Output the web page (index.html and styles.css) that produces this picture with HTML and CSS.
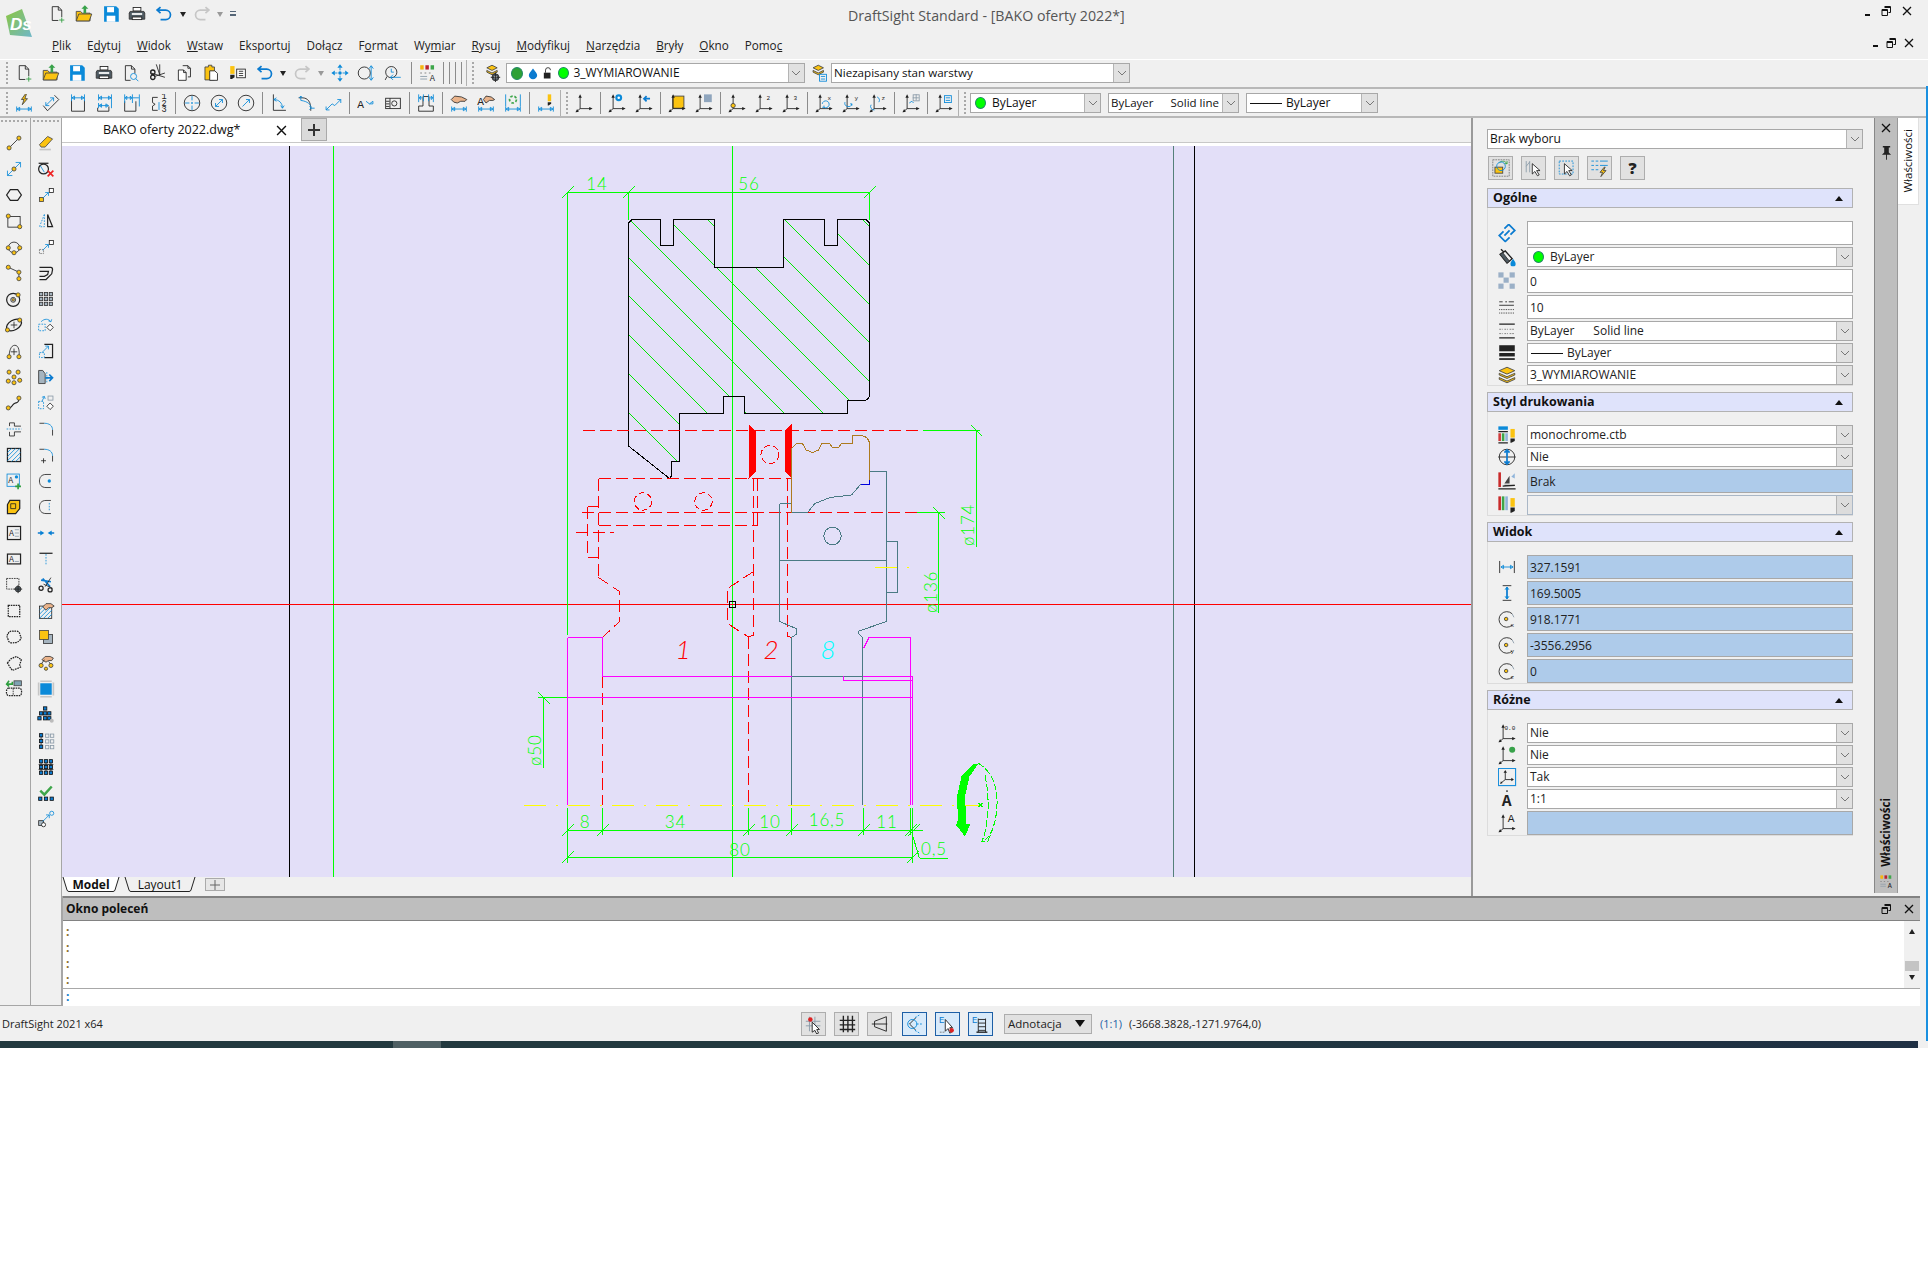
FILE: index.html
```html
<!DOCTYPE html>
<html lang="pl">
<head>
<meta charset="utf-8">
<title>DraftSight Standard - [BAKO oferty 2022*]</title>
<link rel="stylesheet" href="styles.css">
</head>
<body>
<svg class="defs" aria-hidden="true">
<symbol id="new" viewBox="0 0 22 22"><path class="k" d="M5.5 2.5h7l4 4v8M12.5 2.5v4h4M5.5 2.5v16h7"/><path class="g" d="M16.5 15v6M13.5 18h6"/></symbol>
<symbol id="open" viewBox="0 0 22 22"><path class="y" d="M2 8h5l2 2h9v9H2z"/><path class="y" d="M2 19l3-8h15l-3 8z"/><path class="gf" d="M12 1l4 4h-2.5v5h-3V5H8z"/></symbol>
<symbol id="save" viewBox="0 0 22 22"><path class="bf" d="M3 2h14l3 3v15H3z"/><rect class="wf" x="6.500" y="3" width="8" height="6"/><rect class="wf" x="6" y="13" width="10" height="7"/></symbol>
<symbol id="print" viewBox="0 0 22 22"><rect class="w" x="6.500" y="3.500" width="9" height="4"/><path class="dk" d="M3 8h16l1 2v7H2v-7z"/><rect class="wf" x="5" y="10" width="12" height="2"/><rect class="w" x="5.500" y="14.500" width="11" height="3"/></symbol>
<symbol id="prev" viewBox="0 0 22 22"><path class="k" d="M4.500 2.500h7l4 4v5M11.500 2.500v4h4M4.500 2.500v17h6"/><circle class="b" cx="14" cy="15" r="3.500"/><path class="b" d="M16.500 17.500l3 3"/></symbol>
<symbol id="cut" viewBox="0 0 22 22"><path class="k" d="M13 1v13M9 1l4 12M3 11l16 5"/><circle class="k2" cx="5" cy="10" r="2.500"/><circle class="k2" cx="5" cy="16" r="2.500"/><path class="k" d="M7 15l12-4"/></symbol>
<symbol id="copy" viewBox="0 0 22 22"><path class="k" d="M9.500 2.500h6l3 3v10h-3M15.500 2.500v3h3"/><path class="w" d="M4.500 7.500h6l3 3v9h-9z"/><path class="k" d="M10.500 7.500v3h3"/></symbol>
<symbol id="paste" viewBox="0 0 22 22"><path class="y" d="M4 4h4V2h4v2h3v15H4z"/><path class="w" d="M9.500 8.500h6l3 3v8h-9z"/></symbol>
<symbol id="match" viewBox="0 0 22 22"><rect class="yn" x="2" y="3" width="5" height="9"/><path class="kf" d="M2 13h5v3l-3 2H2z"/><rect class="w" x="9.500" y="6.500" width="10" height="10"/><path class="k" d="M12 9h5M12 11.500h5M12 14h5"/></symbol>
<symbol id="undo" viewBox="0 0 22 22"><path class="b2" d="M7 3L3 6.500 7 10M3.500 6.500H13a5.500 5.500 0 0 1 0 11H7"/></symbol>
<symbol id="redo" viewBox="0 0 22 22"><path class="s2" d="M15 3l4 3.500L15 10M18.500 6.500H9a5.500 5.500 0 0 0 0 11h6"/></symbol>
<symbol id="pan" viewBox="0 0 22 22"><path class="bf" d="M11 1l3 4H8zM11 21l3-4H8zM1 11l4-3v6zM21 11l-4-3v6z"/><circle class="bf" cx="11" cy="11" r="2"/><path class="b" d="M11 5v3M11 14v3M5 11h3M14 11h3"/></symbol>
<symbol id="zfit" viewBox="0 0 22 22"><circle class="k" cx="9" cy="11" r="7"/><path class="b" d="M17 3v16M14.500 6L17 2.500 19.500 6M14.500 16L17 19.500 19.500 16"/></symbol>
<symbol id="zprev" viewBox="0 0 22 22"><circle class="k" cx="9" cy="10" r="6.500"/><path class="k" d="M4 15l-2 4"/><path class="b" d="M8 16h12M11 13l-3 3 3 3"/><path class="b" d="M9 6v4h3"/></symbol>
<symbol id="palette" viewBox="0 0 22 22"><rect x="2" y="2" width="4" height="5" fill="#f5b50f"/><rect x="8" y="2" width="4" height="5" fill="#b8232f"/><rect x="14" y="2" width="4" height="5" fill="#3ea64a"/><path class="t1" d="M2 11h3M7 11h3M12 11h3"/><path class="s" d="M2 15h8M2 18h8"/><text class="ltr" x="13" y="20">A</text></symbol>
<symbol id="lstack" viewBox="0 0 22 22"><path class="y" d="M11 2l6 3-6 3-6-3z"/><path class="y" d="M5 8l6 3 6-3v2l-6 3-6-3z"/><circle class="dk" cx="15" cy="16" r="4"/><circle class="wf" cx="15" cy="16" r="1.500"/><path class="k" d="M15 10.500v11M9.500 16h11"/></symbol>
<symbol id="lstate" viewBox="0 0 22 22"><path class="y" d="M9 2l6 3-6 3-6-3z"/><path class="y" d="M3 8l6 3 6-3v2l-6 3-6-3z"/><rect class="b" x="10.500" y="12.500" width="8" height="8"/><path class="b" d="M12 15h5M12 18h5"/></symbol>
<symbol id="dh" viewBox="0 0 22 22"><path class="b" d="M2.500 15v6M19.500 15v6M3 18h16M3 18l3-2v4zM19 18l-3-2v4z"/></symbol>
<symbol id="dsmart" viewBox="0 0 22 22"><use href="#dh"/><path class="y" d="M13 0l-5 7h3l-2 6 6-7h-3l2-6z"/></symbol>
<symbol id="dalign" viewBox="0 0 22 22"><path class="k" d="M2 14l5 6 13-13-5-5"/><path class="b" d="M5 14l9-9M5 14v-4M5 14h4M14 5v4M14 5h-4"/></symbol>
<symbol id="dlin" viewBox="0 0 22 22"><path class="k" d="M3.500 8v12.500h15V8"/><path class="b" d="M3.500 1v8M18.500 1v8M4 5h14M4 5l3-2v4zM18 5l-3-2v4z"/></symbol>
<symbol id="dbase" viewBox="0 0 22 22"><path class="k" d="M15.500 15v5.500h-13v-4"/><path class="b" d="M3.500 1v7M18.500 1v16M4 5h14M4 5l3-2v4zM18 5l-3-2v4zM3.500 11v6M4 14h11M4 14l3-2v4zM15 14l-3-2v4z"/></symbol>
<symbol id="dcont" viewBox="0 0 22 22"><path class="k" d="M2.500 9v11.500h13V9"/><path class="b" d="M2.500 1v10M11.500 1v10M19.500 1v14M3 5h8M3 5l2-2v4zM11 5L9 3v4zM12 5h7"/></symbol>
<symbol id="dord" viewBox="0 0 22 22"><path class="k" d="M9.500 4.500h-6v6l3 2-3 2v5h6"/><path class="b" d="M11 10v9"/><text class="ltb" x="14" y="6">1</text><text class="ltb" x="14" y="14">2</text><text class="ltb" x="14" y="21">3</text></symbol>
<symbol id="crad" viewBox="0 0 22 22"><circle class="k" cx="11" cy="11" r="9"/><path class="b" d="M11 3v5M11 14v5M3 11h5M14 11h5M11 10v2M10 11h2"/></symbol>
<symbol id="cdia" viewBox="0 0 22 22"><circle class="k" cx="11" cy="11" r="9"/><path class="b" d="M7 15l8-8M7 15v-4M7 15h4M15 7v4M15 7h-4"/></symbol>
<symbol id="crd2" viewBox="0 0 22 22"><circle class="k" cx="11" cy="11" r="9"/><path class="b" d="M7 15l8-8M15 7v4M15 7h-4"/></symbol>
<symbol id="dang" viewBox="0 0 22 22"><path class="k" d="M4.500 1v18.500H19"/><path class="b" d="M5 7c6 0 10 4 10 10M15 17l-2-3M15 17l2-3M5 7l3-2M5 7l3 2"/></symbol>
<symbol id="darc" viewBox="0 0 22 22"><path class="k" d="M2.500 5h4c7 0 10 5 10 13v2"/><path class="b" d="M5 3v5c8 1 12 5 12 9h4M5 3l-2 2M5 3l2 2M17 17l-2-2M17 17l-2 2" /></symbol>
<symbol id="djog" viewBox="0 0 22 22"><path class="b" d="M3 19l7-7 3 2 7-7M20 7h-4M20 7v4M3 19v-4M3 19h4"/></symbol>
<symbol id="tleader" viewBox="0 0 22 22"><text class="ltx" x="1" y="17">A</text><path class="b" d="M11 9l4 3 4-3M15 12l4 0v-3"/></symbol>
<symbol id="tol" viewBox="0 0 22 22"><rect class="k" x="2.500" y="5.500" width="17" height="12"/><circle class="k" cx="12.500" cy="11.500" r="3"/><path class="k" d="M7.500 5.500v12M3 9h4M3 12h4M3 15h4"/></symbol>
<symbol id="dcl" viewBox="0 0 22 22"><path class="k" d="M2.500 20.500v-6h5v-11h7v11h5v6z"/><path class="b" d="M2.500 1v9M19.500 1v9M3 5h3M19 5h-3M3 5l2-2v4zM19 5l-2-2v4z"/><path class="b" d="M8 1v8M14 1v8"/></symbol>
<symbol id="dhand" viewBox="0 0 22 22"><use href="#dh"/><path class="h" d="M2 7l4-4 8 1 6 3-2 2-5 0-4 2-4-1z"/></symbol>
<symbol id="ahand" viewBox="0 0 22 22"><use href="#dh"/><path class="h" d="M8 7l3-4 6 1 4 3-2 1-4 0-4 3z"/><text class="ltx" x="1" y="13">A</text></symbol>
<symbol id="drec" viewBox="0 0 22 22"><use href="#dh"/><circle cx="11" cy="7" r="4" fill="none" stroke="#3ea64a" stroke-width="2" stroke-dasharray="3 2"/><path class="b" d="M2.500 1v14M19.500 1v14"/></symbol>
<symbol id="dmatch" viewBox="0 0 22 22"><use href="#dh"/><rect class="yn" x="13" y="1" width="4" height="8"/><path class="kf" d="M13 10h4v2l-3 2h-1z"/></symbol>
<symbol id="ax" viewBox="0 0 22 22"><path class="k" d="M6.500 3v14.500H19M6.500 17.500l-4 3.500"/><path class="kf" d="M6.500 1l-2 4h4zM21 17.500l-4-2v4zM1 22l4-1-2-3z"/></symbol>
<symbol id="axg" viewBox="0 0 22 22"><use href="#ax"/><circle class="bf" cx="13" cy="5" r="4"/><circle class="wf" cx="13" cy="5" r="1.500"/></symbol>
<symbol id="axb" viewBox="0 0 22 22"><use href="#ax"/><path class="b2" d="M18 6h-6M14 3l-3 3 3 3"/></symbol>
<symbol id="axy" viewBox="0 0 22 22"><rect class="y" x="6" y="3" width="13" height="14"/><use href="#ax"/></symbol>
<symbol id="axs" viewBox="0 0 22 22"><use href="#ax"/><rect x="11" y="1" width="9" height="9" fill="#8fa5bd"/></symbol>
<symbol id="ax1" viewBox="0 0 22 22"><use href="#ax"/><circle class="y" cx="6.500" cy="14" r="2.500"/></symbol>
<symbol id="ax2" viewBox="0 0 22 22"><use href="#ax"/><text class="lts" x="14" y="8">2</text></symbol>
<symbol id="ax3" viewBox="0 0 22 22"><use href="#ax"/><text class="lts" x="14" y="8">3</text></symbol>
<symbol id="axx" viewBox="0 0 22 22"><use href="#ax"/><text class="lts" x="15" y="7">x</text><path class="b" d="M9 12a4 4 0 1 1 2 4M9 16l2 0 0-2"/></symbol>
<symbol id="axyy" viewBox="0 0 22 22"><use href="#ax"/><text class="lts" x="15" y="7">y</text><path class="b" d="M4 10a4 4 0 0 0 8 2M12 12l-2 0M12 12v2"/></symbol>
<symbol id="axz" viewBox="0 0 22 22"><use href="#ax"/><text class="lts" x="15" y="7">z</text><path class="b" d="M10 4a4 4 0 0 1 2 6M3 13a4 4 0 0 0 4 6"/></symbol>
<symbol id="axv" viewBox="0 0 22 22"><use href="#ax"/><rect class="s" x="13.500" y="1.500" width="7" height="7"/><path class="s" d="M17 1v7M13 5h7"/><path class="b" d="M9 11l3-2 2 2"/></symbol>
<symbol id="axl" viewBox="0 0 22 22"><use href="#ax"/><rect class="b" x="11.500" y="2.500" width="8" height="8"/><path class="b" d="M13 5h5M13 8h5"/></symbol>
<symbol id="c1" viewBox="0 0 22 22"><path class="k" d="M5 17L17 5"/><circle class="y" cx="5" cy="17" r="2.500"/><circle class="y" cx="17" cy="5" r="2.500"/></symbol>
<symbol id="c2" viewBox="0 0 22 22"><path class="b" d="M3 19L19 3M3 19v-6M3 19h6M19 3v6M19 3h-6"/><circle class="y" cx="11" cy="11" r="2.500"/></symbol>
<symbol id="c3" viewBox="0 0 22 22"><path class="k2" d="M6.500 4.500h9l4.500 6.500-4.500 6.500h-9L2 11z"/></symbol>
<symbol id="c4" viewBox="0 0 22 22"><rect class="k" x="3.500" y="5.500" width="15" height="13"/><circle class="y" cx="4" cy="5" r="2.500"/><circle class="y" cx="18" cy="18" r="2.500"/></symbol>
<symbol id="c5" viewBox="0 0 22 22"><path class="k" d="M4 12a7 7 0 0 1 14 0M4 12c0 4 4 6 7 6s7-2 7-6"/><circle class="y" cx="4" cy="12" r="2.500"/><circle class="y" cx="18" cy="12" r="2.500"/><circle class="y" cx="11" cy="18" r="2.500"/></symbol>
<symbol id="c6" viewBox="0 0 22 22"><path class="k" d="M4 4L17 10V18"/><circle class="y" cx="4" cy="4" r="2.500"/><circle class="y" cx="17" cy="10" r="2.500"/><circle class="y" cx="17" cy="18" r="2.500"/></symbol>
<symbol id="c7" viewBox="0 0 22 22"><circle class="k2" cx="10" cy="12" r="8"/><circle class="k" cx="10" cy="12" r="3"/><circle class="y" cx="16" cy="6" r="2.500"/><circle class="y" cx="10" cy="12" r="1.500"/></symbol>
<symbol id="c8" viewBox="0 0 22 22"><ellipse class="k2" cx="11" cy="11" rx="10" ry="6" transform="rotate(-30 11 11)"/><path class="k" d="M11 7v8M7 11h8"/><circle class="y" cx="3" cy="17" r="2.500"/><circle class="y" cx="18" cy="5" r="2.500"/></symbol>
<symbol id="c9" viewBox="0 0 22 22"><path class="k" d="M5 18c0-6 2-14 7-14s6 8 5 14M11 8v8M7 12h8"/><circle class="y" cx="5" cy="18" r="2.500"/><circle class="y" cx="17" cy="18" r="2.500"/></symbol>
<symbol id="c10" viewBox="0 0 22 22"><circle class="y" cx="5" cy="5" r="2.500"/><circle class="y" cx="16" cy="5" r="2.500"/><circle class="y" cx="11" cy="11" r="2.500"/><circle class="y" cx="4" cy="16" r="2.500"/><circle class="y" cx="18" cy="15" r="2.500"/><circle class="y" cx="11" cy="18" r="2.500"/></symbol>
<symbol id="c11" viewBox="0 0 22 22"><path class="k2" d="M4 17c4 1 4-3 7-5s6 0 6-7"/><circle class="y" cx="4" cy="17" r="2.500"/><circle class="y" cx="17" cy="5" r="2.500"/></symbol>
<symbol id="c12" viewBox="0 0 22 22"><path class="k" d="M5.500 3.500h6v4h8M5.500 3.500v4M5.500 14.500v5h6v-5h8"/><path class="bd" d="M2 11h18"/></symbol>
<symbol id="c13" viewBox="0 0 22 22"><rect class="k2" x="3" y="3" width="16" height="16"/><path class="b" d="M3 8l5-5M3 13l10-10M3 18l15-15M8 19l11-11M13 19l6-6"/></symbol>
<symbol id="c14" viewBox="0 0 22 22"><rect class="b" x="2.500" y="2.500" width="15" height="15"/><text class="ltb" x="4" y="14">A</text><circle class="bf" cx="14" cy="6" r="2"/><path class="g2" d="M16 14v7M12.500 17.500h7"/></symbol>
<symbol id="c15" viewBox="0 0 22 22"><path class="y2" d="M6 3h12v10l-5 6H3V8z"/><path class="k" d="M7 7h6v6H7z"/></symbol>
<symbol id="c16" viewBox="0 0 22 22"><rect class="k2" x="3" y="3" width="16" height="16"/><text class="ltb" x="5" y="15">A</text><path class="s" d="M12 7h5M12 11h5M12 15h5"/></symbol>
<symbol id="c17" viewBox="0 0 22 22"><rect class="k2" x="3" y="5" width="16" height="12"/><text class="ltb" x="5" y="15">A</text><path class="s" d="M12 14h5"/></symbol>
<symbol id="c18" viewBox="0 0 22 22"><rect class="dt" x="2" y="3" width="15" height="13"/><circle class="dk" cx="16" cy="16" r="3.500"/><path class="k" d="M16 11v10M11 16h10"/></symbol>
<symbol id="c19" viewBox="0 0 22 22"><rect class="dt2" x="4" y="4" width="14" height="14"/></symbol>
<symbol id="c20" viewBox="0 0 22 22"><path class="dt2" d="M4 7c1-4 5-3 7-3s6-1 7 3 3 5 0 8-5 3-7 3-6 1-7-3-3-5 0-8z"/></symbol>
<symbol id="c21" viewBox="0 0 22 22"><path class="dt2" d="M3 11l4-5 7-3 6 4-2 6 1 3-7 3-3 1-3-4z"/></symbol>
<symbol id="c22" viewBox="0 0 22 22"><path class="g2" d="M9 2v3H3M5 1L2 5l3 3"/><rect x="11" y="1" width="9" height="6" fill="#7fa3b3" stroke="#444"/><path class="dt2" d="M4 10h14c3 0 3 9 0 9H4c-3 0-3-9 0-9z"/><path class="dt" d="M10 10v9"/></symbol>
<symbol id="d1" viewBox="0 0 22 22"><path class="y" d="M3 13L13 3l6 3-9 10H5z"/><path class="s2" d="M3 19h14"/></symbol>
<symbol id="d2" viewBox="0 0 22 22"><circle class="k2" cx="8" cy="11" r="6"/><path class="k2" d="M2 4h12"/><path class="b" d="M4 7l5 8"/><path d="M13 13l7 7M20 13l-7 7" fill="none" stroke="#e22" stroke-width="2"/></symbol>
<symbol id="d3" viewBox="0 0 22 22"><rect class="y" x="3" y="14" width="5" height="5"/><rect class="w" x="15" y="3" width="5" height="5"/><path class="b" d="M7 15l7-7M14 8v4M14 8h-4"/></symbol>
<symbol id="d4" viewBox="0 0 22 22"><path class="k2" d="M13 3v15h6z"/><path class="bd" d="M9 3L3 18h6z"/></symbol>
<symbol id="d5" viewBox="0 0 22 22"><rect class="t1" x="3" y="14" width="5" height="5"/><rect class="w" x="15" y="3" width="5" height="5"/><path class="b" d="M7 15l7-7M14 8v4M14 8h-4"/></symbol>
<symbol id="d6" viewBox="0 0 22 22"><path class="k2" d="M3 4h14c2 0 2 2 2 3l-1 5-7 7H3M3 9h11l-1 4-4 2H3"/></symbol>
<symbol id="d7" viewBox="0 0 22 22"><g class="sq"><rect x="3" y="3" width="4" height="4"/><rect x="9" y="3" width="4" height="4"/><rect x="15" y="3" width="4" height="4"/><rect x="3" y="9" width="4" height="4"/><rect x="9" y="9" width="4" height="4"/><rect x="15" y="9" width="4" height="4"/><rect x="3" y="15" width="4" height="4"/><rect x="9" y="15" width="4" height="4"/><rect x="15" y="15" width="4" height="4"/></g></symbol>
<symbol id="d8" viewBox="0 0 22 22"><rect class="bd" x="2" y="10" width="8" height="8"/><path class="w" d="M16 10l4 4-4 4-4-4z"/><path class="b" d="M5 7c4-4 9-4 12 0M17 7l-3-1M17 7l1-3"/></symbol>
<symbol id="d9" viewBox="0 0 22 22"><path class="k2" d="M9 3h10v16H9"/><rect class="bd" x="3" y="13" width="6" height="6"/><path class="b" d="M6 13l8-8M14 5v4M14 5h-4"/></symbol>
<symbol id="d10" viewBox="0 0 22 22"><path class="sf" d="M2 3h5l3 4v12H2z"/><path class="b2" d="M10 12h9M15 8l4 4-4 4"/><path class="bd" d="M12 5v14"/></symbol>
<symbol id="d11" viewBox="0 0 22 22"><rect class="s" x="13.500" y="2.500" width="6" height="5"/><rect class="bd" x="2" y="9" width="6" height="9"/><path class="w" d="M16 11l4 4-4 4-4-4z"/><path class="b" d="M6 9l3-6M9 3l-3 1M9 3l1 3"/></symbol>
<symbol id="d12" viewBox="0 0 22 22"><path class="k" d="M3 4h6M19 12v7"/><path class="b" d="M9 4c6 0 10 3 10 8"/></symbol>
<symbol id="d13" viewBox="0 0 22 22"><path class="k" d="M3 4h6M19 12v7M8 15v6M5 18h6"/><path class="b" d="M9 4c6 0 10 3 10 8"/></symbol>
<symbol id="d14" viewBox="0 0 22 22"><path class="k" d="M17 3h-6C5 3 3 7 3 11s2 8 8 8h6"/><circle class="bf" cx="15" cy="11" r="2"/></symbol>
<symbol id="d15" viewBox="0 0 22 22"><path class="k" d="M17 3h-6C5 3 3 7 3 11s2 8 8 8h6"/><path class="bd" d="M15 6v10"/></symbol>
<symbol id="d16" viewBox="0 0 22 22"><path class="bf" d="M9 11L4 8v6zM13 11l5-3v6z"/><path class="b2" d="M1 11h6M15 11h6"/></symbol>
<symbol id="d17" viewBox="0 0 22 22"><path class="k2" d="M3 4h16"/><path class="bd" d="M11 5v14"/></symbol>
<symbol id="d18" viewBox="0 0 22 22"><path class="b2" d="M7 3l9 10M5 5l12 2"/><path class="k" d="M17 2L10 13M19 15L8 10"/><circle class="k2" cx="5" cy="15" r="2.500"/><circle class="k2" cx="16" cy="17" r="2.500"/></symbol>
<symbol id="d19" viewBox="0 0 22 22"><rect class="k" x="3" y="5" width="15" height="15"/><path class="b" d="M3 10l5-5M3 15L13 5M3 20L18 5M8 20L18 10M13 20l5-5"/><path class="h" d="M7 6l4-4 6 0 4 3-3 2-4 0-3 3z"/></symbol>
<symbol id="d20" viewBox="0 0 22 22"><rect class="sf" x="8" y="8" width="11" height="11"/><rect class="y" x="3" y="3" width="11" height="11"/></symbol>
<symbol id="d21" viewBox="0 0 22 22"><path class="h" d="M6 7l4-4 6 0 4 2-2 3-4 0-3 2z"/><path class="k" d="M4 14l5-7M17 14c-1-3-2-4-3-5"/><circle class="y" cx="5" cy="14" r="2.500"/><circle class="y" cx="11" cy="18" r="2"/><circle class="y" cx="17" cy="14" r="2.500"/></symbol>
<symbol id="d22" viewBox="0 0 22 22"><rect class="bf" x="4" y="4" width="14" height="14"/><path class="s2" d="M2 3v16M20 3v16M4 1.500h14M4 20.500h14"/></symbol>
<symbol id="d23" viewBox="0 0 22 22"><g class="nd"><rect x="8" y="1" width="4" height="4"/><rect x="3" y="7" width="4" height="4"/><rect x="13" y="7" width="4" height="4"/><rect x="8" y="7" width="4" height="4"/><rect x="1" y="13" width="4" height="4"/><rect x="8" y="13" width="4" height="4"/><rect x="13" y="13" width="4" height="4"/></g><circle cx="18" cy="18" r="2.500" fill="#bbb"/></symbol>
<symbol id="d24" viewBox="0 0 22 22"><path class="k" d="M5 2v18"/><g class="nd"><rect x="3" y="2" width="4" height="4"/><rect x="3" y="9" width="4" height="4"/><rect x="3" y="16" width="4" height="4"/></g><rect class="s" x="10.500" y="2.500" width="4" height="4"/><rect class="s" x="16.500" y="2.500" width="4" height="4"/><rect class="s" x="10.500" y="9.500" width="4" height="4"/><rect class="s" x="16.500" y="9.500" width="4" height="4"/><rect class="s" x="10.500" y="16.500" width="4" height="4"/><rect class="s" x="16.500" y="16.500" width="4" height="4"/></symbol>
<symbol id="d25" viewBox="0 0 22 22"><path class="k" d="M5 2v18M11 2v18M17 2v18M2 8h18M2 14h18"/><g class="nd"><rect x="3" y="2" width="4" height="4"/><rect x="9" y="2" width="4" height="4"/><rect x="15" y="2" width="4" height="4"/><rect x="3" y="9" width="4" height="4"/><rect x="9" y="9" width="4" height="4"/><rect x="15" y="9" width="4" height="4"/><rect x="3" y="16" width="4" height="4"/><rect x="9" y="16" width="4" height="4"/><rect x="15" y="16" width="4" height="4"/></g></symbol>
<symbol id="d26" viewBox="0 0 22 22"><path d="M4 8l5 5 9-10" fill="none" stroke="#3ea64a" stroke-width="3"/><g class="nd"><rect x="2" y="16" width="4" height="4"/><rect x="9" y="16" width="4" height="4"/><rect x="16" y="16" width="4" height="4"/></g></symbol>
<symbol id="d27" viewBox="0 0 22 22"><rect class="sf" x="2" y="13" width="6" height="6"/><circle class="w" cx="8" cy="18" r="2.500"/><path class="b" d="M7 14l8-8M15 6v4M15 6h-4"/><circle class="b" cx="18" cy="4" r="2.500"/></symbol>
<symbol id="p-sel" viewBox="0 0 22 22"><rect class="t1" x="1.500" y="1.500" width="19" height="19"/><path class="g" d="M9 5c3-3 7-2 9 1M18 6h-3M18 6V3"/><rect class="y" x="4" y="10" width="9" height="7"/><circle class="b" cx="11" cy="9" r="5"/></symbol>
<symbol id="p-add" viewBox="0 0 22 22"><path class="s" d="M2 3v13M6 3v13M2 9l4-5"/><path class="w" d="M9 6v12l3-3 3 5 2-1-3-5h4z"/></symbol>
<symbol id="p-win" viewBox="0 0 22 22"><rect class="bd" x="2" y="3" width="16" height="15"/><path class="w" d="M8 6v12l3-3 3 5 2-1-3-5h4z"/></symbol>
<symbol id="p-quick" viewBox="0 0 22 22"><path class="b" d="M1 3h3M6 3h3M11 3h9M1 8h3M6 8h3M11 8h9M1 13h3M6 13h3"/><path class="y" d="M16 10l-5 6h3l-2 5 6-7h-3l2-4z"/></symbol>
<symbol id="p-link" viewBox="0 0 22 22"><path class="b2" d="M8 6l5-5 7 7-5 5M14 16l-5 5-7-7 5-5M8 14l6-6"/></symbol>
<symbol id="p-fill" viewBox="0 0 22 22"><path class="k2" d="M4 2l3 3M3 8l6-4 8 9-6 5z"/><path class="dk" d="M3 8l8 10 3-2-8-10z"/><path class="bf" d="M18 13c2 3 3 4 3 6a3 3 0 0 1-6 0c0-2 1-3 3-6z"/></symbol>
<symbol id="p-trans" viewBox="0 0 22 22"><g fill="#9bb0c7"><rect x="1" y="1" width="6" height="6"/><rect x="14" y="1" width="6" height="6"/><rect x="7" y="7" width="6" height="6"/><rect x="1" y="14" width="6" height="6"/><rect x="14" y="14" width="6" height="6"/></g></symbol>
<symbol id="p-lscale" viewBox="0 0 22 22"><path class="k" d="M2 5h4M9 5h2M13 5h6M2 9h17"/><path class="dots" d="M2 14h17M2 18h17"/></symbol>
<symbol id="p-ltype" viewBox="0 0 22 22"><path class="k2" d="M2 3h18M2 19h18"/><path class="t1" d="M2 9h4M8 9h4M14 9h6M2 14h4M8 14h4M14 14h6"/></symbol>
<symbol id="p-lw" viewBox="0 0 22 22"><rect x="2" y="2" width="18" height="7" fill="#222"/><rect x="2" y="11" width="18" height="4" fill="#222"/><rect x="2" y="17" width="18" height="2" fill="#222"/></symbol>
<symbol id="p-layer" viewBox="0 0 22 22"><path class="y" d="M11 2l9 4-9 4-9-4z"/><path class="y" d="M2 9l9 4 9-4v2l-9 4-9-4z"/><path class="y" d="M2 14l9 4 9-4v2l-9 4-9-4z"/></symbol>
<symbol id="p-ctb" viewBox="0 0 22 22"><rect x="1" y="1" width="11" height="4" fill="#0b8ad9"/><path class="k2" d="M1 7h11"/><rect x="1" y="9" width="3" height="9" fill="#d03a3a"/><rect x="5" y="9" width="3" height="9" fill="#3ea64a"/><rect x="9" y="9" width="3" height="9" fill="#8fb4da"/><rect class="yn" x="15" y="4" width="5" height="10"/><path class="kf" d="M15 15h5v3l-4 2h-1z"/><path class="k2" d="M1 20h11"/></symbol>
<symbol id="p-disp" viewBox="0 0 22 22"><circle class="k" cx="11" cy="11" r="9"/><path class="k" d="M1 11h20"/><path class="b2" d="M11 3v16M8 6l3-3 3 3M8 16l3 3 3-3"/></symbol>
<symbol id="p-tab" viewBox="0 0 22 22"><rect x="1" y="1" width="3" height="17" fill="#c92a2a"/><path class="k2" d="M6 17l14-1M1 20h20"/><path d="M8 14l6-9v9z" fill="#444"/><path d="M16 6l4-4v6z" fill="#8fb4da"/><path class="k" d="M8 16h12"/></symbol>
<symbol id="p-col" viewBox="0 0 22 22"><rect x="1" y="1" width="3" height="16" fill="#c92a2a"/><rect x="5" y="1" width="3" height="16" fill="#3ea64a"/><rect x="9" y="1" width="3" height="16" fill="#8fb4da"/><rect class="yn" x="15" y="3" width="5" height="10"/><path class="kf" d="M15 14h5v4l-4 2h-1z"/></symbol>
<symbol id="p-w" viewBox="0 0 22 22"><path class="k" d="M2.500 4v14M19.500 4v14"/><path class="b" d="M4 11h14M4 11l3-2v4zM18 11l-3-2v4z"/></symbol>
<symbol id="p-h" viewBox="0 0 22 22"><path class="k" d="M6 2.500h10M6 19.500h10"/><path class="b2" d="M11 4v14"/><path class="bf" d="M11 4l3 3H8zM11 18l3-3H8z"/></symbol>
<symbol id="p-cx" viewBox="0 0 22 22"><path class="k" d="M17 5A9 9 0 1 0 17 18"/><path class="s" d="M17 5l2 4"/><circle class="y" cx="10" cy="11" r="2"/><text class="lts" x="15" y="20">x</text></symbol>
<symbol id="p-cy" viewBox="0 0 22 22"><path class="k" d="M17 5A9 9 0 1 0 17 18"/><path class="s" d="M17 5l2 4"/><circle class="y" cx="10" cy="11" r="2"/><text class="lts" x="15" y="20">y</text></symbol>
<symbol id="p-cz" viewBox="0 0 22 22"><path class="k" d="M17 5A9 9 0 1 0 17 18"/><path class="s" d="M17 5l2 4"/><circle class="y" cx="10" cy="11" r="2"/><text class="lts" x="15" y="20">z</text></symbol>
<symbol id="p-u1" viewBox="0 0 22 22"><use href="#ax"/><text class="lts" x="8" y="7">0.0</text></symbol>
<symbol id="p-u2" viewBox="0 0 22 22"><use href="#ax"/><circle class="gf" cx="17" cy="5" r="3.500"/></symbol>
<symbol id="p-u3" viewBox="0 0 22 22"><rect class="bt" x="1" y="1" width="20" height="20"/><path class="k" d="M9 5v9h9M9 14l-5 4"/><path class="kf" d="M9 3L7 6h4zM19 14l-3-2v4zM3 19l3-1-2-2z"/></symbol>
<symbol id="p-a" viewBox="0 0 22 22"><path class="k2" d="M11 1v2"/><text class="lbg" x="5" y="19">A</text></symbol>
<symbol id="p-u4" viewBox="0 0 22 22"><use href="#ax"/><text class="ltx" x="12" y="10">A</text></symbol>
<symbol id="st1" viewBox="0 0 22 22"><path class="s" d="M6 3v16M12 3v16M2 8h16M2 13h16"/><path class="w" d="M9 9v11l3-2 2 4 2-1-2-4h3z"/><circle cx="7" cy="6" r="2.500" fill="#d22"/></symbol>
<symbol id="st2" viewBox="0 0 22 22"><path class="k2" d="M7 2v18M12 2v18M17 2v18M3 7h17M3 12h17M3 17h17"/></symbol>
<symbol id="st3" viewBox="0 0 22 22"><path class="k" d="M5 8l13-5v16L5 14zM2 11h17"/></symbol>
<symbol id="st4" viewBox="0 0 22 22"><path class="k" d="M12 4l-7 7 7 7"/><circle class="b" cx="8" cy="11" r="5"/><path class="bd" d="M13 11h7M11 4l5-3M11 18l5 3"/></symbol>
<symbol id="st5" viewBox="0 0 22 22"><text class="ltb2" x="1" y="10">E</text><path class="w" d="M8 6v13l3-3 2 5 2-1-2-5h3z"/><path class="t1" d="M2 20h6"/><circle cx="15" cy="18" r="2.500" fill="#d22"/></symbol>
<symbol id="st6" viewBox="0 0 22 22"><text class="ltb2" x="1" y="10">E</text><path class="k" d="M8 6h8M8 10h8M8 14h8M8 18h8M8 5v15M16 5v15"/><path class="k2" d="M6 20h12"/></symbol>
<symbol id="chev" viewBox="0 0 10 6"><path d="M1 1l4 4 4-4" fill="none" stroke="#777"/></symbol>
<symbol id="x" viewBox="0 0 10 10"><path d="M1 1l8 8M9 1L1 9" fill="none" stroke="#111" stroke-width="1.300"/></symbol>
<symbol id="rst" viewBox="0 0 10 10"><path d="M3.500 .5h6v6h-2M1 3.500h5.500V9.500H1zM1 4.500h5.500M3.500 1.500h6" fill="none" stroke="#111"/></symbol>
<symbol id="pin" viewBox="0 0 12 16"><path d="M2 1h8v1.500H8.500V8L11 10.500H1L3.500 8V2.500H2zM5.500 10.500h1V16h-1z" fill="#222"/></symbol>
</svg>

<div class="app">
  <header class="head">
    <div class="logo-cell">
      <svg class="logo" viewBox="0 0 28 30">
        <defs><linearGradient id="lg" x1="0" y1="0" x2="1" y2="1"><stop offset="0" stop-color="#8cc63f"/><stop offset="1" stop-color="#6fb7c9"/></linearGradient></defs>
        <path d="M1 8L17 1l10 28-22-2z" fill="url(#lg)"/>
        <text class="logo-t" x="5" y="22">Ds</text>
      </svg>
    </div>
    <div class="titlebar">
      <div class="quick">
        <svg class="ic"><use href="#new"/></svg>
        <svg class="ic"><use href="#open"/></svg>
        <svg class="ic"><use href="#save"/></svg>
        <svg class="ic"><use href="#print"/></svg>
        <svg class="ic"><use href="#undo"/></svg>
        <span class="dd"></span>
        <svg class="ic"><use href="#redo"/></svg>
        <span class="dd off"></span>
        <span class="more"></span>
      </div>
      <div class="title">DraftSight Standard - [BAKO oferty 2022*]</div>
      <div class="winctl">
        <span class="min"></span>
        <svg class="wi"><use href="#rst"/></svg>
        <svg class="wi"><use href="#x"/></svg>
      </div>
    </div>
    <div class="menubar">
      <nav class="menu">
        <span><u>P</u>lik</span><span>E<u>d</u>ytuj</span><span><u>W</u>idok</span><span><u>W</u>staw</span><span>Eksportuj</span><span>Dołącz</span><span>F<u>o</u>rmat</span><span>Wy<u>m</u>iar</span><span><u>R</u>ysuj</span><span><u>M</u>odyfikuj</span><span><u>N</u>arzędzia</span><span><u>B</u>ryły</span><span><u>O</u>kno</span><span>Pomo<u>c</u></span>
      </nav>
      <div class="winctl inner">
        <span class="min"></span>
        <svg class="wi"><use href="#rst"/></svg>
        <svg class="wi"><use href="#x"/></svg>
      </div>
    </div>
  </header>

  <div class="tb tb1">
    <span class="handle"></span>
    <svg class="ic"><use href="#new"/></svg>
    <svg class="ic"><use href="#open"/></svg>
    <svg class="ic"><use href="#save"/></svg>
    <svg class="ic"><use href="#print"/></svg>
    <svg class="ic"><use href="#prev"/></svg>
    <svg class="ic"><use href="#cut"/></svg>
    <svg class="ic"><use href="#copy"/></svg>
    <svg class="ic"><use href="#paste"/></svg>
    <svg class="ic"><use href="#match"/></svg>
    <svg class="ic"><use href="#undo"/></svg>
    <span class="dd"></span>
    <svg class="ic"><use href="#redo"/></svg>
    <span class="dd off"></span>
    <svg class="ic"><use href="#pan"/></svg>
    <svg class="ic"><use href="#zfit"/></svg>
    <svg class="ic"><use href="#zprev"/></svg>
    <i class="sep first"></i>
    <svg class="ic"><use href="#palette"/></svg>
    <i class="sep"></i><i class="sep"></i><i class="sep"></i><i class="sep"></i>
    <i class="bar"></i>
    <span class="handle"></span>
    <svg class="ic lmgr"><use href="#lstack"/></svg>
    <div class="combo layer-combo">
      <div class="val">
        <span class="dot dark"></span>
        <svg class="mini" viewBox="0 0 12 14"><path d="M6 1c3 4 5 6 5 8a5 5 0 0 1-10 0c0-2 2-4 5-8z" fill="#0b7bd0"/></svg>
        <svg class="mini" viewBox="0 0 12 14"><rect x="1" y="6" width="8" height="7" fill="#222"/><path d="M3 6V3a3 3 0 0 1 6 0" fill="none" stroke="#222"/></svg>
        <span class="dot big"></span>
        <span class="ltxt">3_WYMIAROWANIE</span>
      </div>
      <span class="arrow"><svg class="cv"><use href="#chev"/></svg></span>
    </div>
    <svg class="ic"><use href="#lstate"/></svg>
    <div class="combo state-combo">
      <div class="val">Niezapisany stan warstwy</div>
      <span class="arrow"><svg class="cv"><use href="#chev"/></svg></span>
    </div>
  </div>

  <div class="tb tb2">
    <span class="handle"></span>
    <svg class="ic"><use href="#dsmart"/></svg>
    <svg class="ic"><use href="#dalign"/></svg>
    <svg class="ic"><use href="#dlin"/></svg>
    <svg class="ic"><use href="#dbase"/></svg>
    <svg class="ic"><use href="#dcont"/></svg>
    <svg class="ic"><use href="#dord"/></svg>
    <i class="sep"></i>
    <svg class="ic"><use href="#crad"/></svg>
    <svg class="ic"><use href="#cdia"/></svg>
    <svg class="ic"><use href="#crd2"/></svg>
    <i class="sep"></i>
    <svg class="ic"><use href="#dang"/></svg>
    <svg class="ic"><use href="#darc"/></svg>
    <svg class="ic"><use href="#djog"/></svg>
    <i class="sep"></i>
    <svg class="ic"><use href="#tleader"/></svg>
    <svg class="ic"><use href="#tol"/></svg>
    <i class="sep"></i>
    <svg class="ic"><use href="#dcl"/></svg>
    <i class="sep"></i>
    <svg class="ic"><use href="#dhand"/></svg>
    <svg class="ic"><use href="#ahand"/></svg>
    <svg class="ic"><use href="#drec"/></svg>
    <i class="sep"></i>
    <svg class="ic"><use href="#dmatch"/></svg>
    <i class="bar"></i>
    <span class="handle"></span>
    <svg class="ic"><use href="#ax"/></svg>
    <i class="sep"></i>
    <svg class="ic"><use href="#axg"/></svg>
    <svg class="ic"><use href="#axb"/></svg>
    <i class="sep"></i>
    <svg class="ic"><use href="#axy"/></svg>
    <svg class="ic"><use href="#axs"/></svg>
    <i class="sep"></i>
    <svg class="ic"><use href="#ax1"/></svg>
    <svg class="ic"><use href="#ax2"/></svg>
    <svg class="ic"><use href="#ax3"/></svg>
    <i class="sep"></i>
    <svg class="ic"><use href="#axx"/></svg>
    <svg class="ic"><use href="#axyy"/></svg>
    <svg class="ic"><use href="#axz"/></svg>
    <i class="sep"></i>
    <svg class="ic"><use href="#axv"/></svg>
    <i class="sep"></i>
    <svg class="ic"><use href="#axl"/></svg>
    <i class="bar"></i>
    <span class="handle"></span>
    <div class="combo c-color"><div class="val"><span class="dot big"></span>ByLayer</div><span class="arrow"><svg class="cv"><use href="#chev"/></svg></span></div>
    <div class="combo c-ltype"><div class="val">ByLayer<span class="wide">Solid line</span></div><span class="arrow"><svg class="cv"><use href="#chev"/></svg></span></div>
    <div class="combo c-lw"><div class="val"><span class="dash"></span>ByLayer</div><span class="arrow"><svg class="cv"><use href="#chev"/></svg></span></div>
  </div>

  <div class="work">
    <aside class="strip">
      <div class="grip"></div>
      <svg class="ic"><use href="#c1"/></svg><svg class="ic"><use href="#c2"/></svg><svg class="ic"><use href="#c3"/></svg><svg class="ic"><use href="#c4"/></svg><svg class="ic"><use href="#c5"/></svg><svg class="ic"><use href="#c6"/></svg><svg class="ic"><use href="#c7"/></svg><svg class="ic"><use href="#c8"/></svg><svg class="ic"><use href="#c9"/></svg><svg class="ic"><use href="#c10"/></svg><svg class="ic"><use href="#c11"/></svg><svg class="ic"><use href="#c12"/></svg><svg class="ic"><use href="#c13"/></svg><svg class="ic"><use href="#c14"/></svg><svg class="ic"><use href="#c15"/></svg><svg class="ic"><use href="#c16"/></svg><svg class="ic"><use href="#c17"/></svg><svg class="ic"><use href="#c18"/></svg><svg class="ic"><use href="#c19"/></svg><svg class="ic"><use href="#c20"/></svg><svg class="ic"><use href="#c21"/></svg><svg class="ic"><use href="#c22"/></svg>
    </aside>
    <aside class="strip">
      <div class="grip"></div>
      <svg class="ic"><use href="#d1"/></svg><svg class="ic"><use href="#d2"/></svg><svg class="ic"><use href="#d3"/></svg><svg class="ic"><use href="#d4"/></svg><svg class="ic"><use href="#d5"/></svg><svg class="ic"><use href="#d6"/></svg><svg class="ic"><use href="#d7"/></svg><svg class="ic"><use href="#d8"/></svg><svg class="ic"><use href="#d9"/></svg><svg class="ic"><use href="#d10"/></svg><svg class="ic"><use href="#d11"/></svg><svg class="ic"><use href="#d12"/></svg><svg class="ic"><use href="#d13"/></svg><svg class="ic"><use href="#d14"/></svg><svg class="ic"><use href="#d15"/></svg><svg class="ic"><use href="#d16"/></svg><svg class="ic"><use href="#d17"/></svg><svg class="ic"><use href="#d18"/></svg><svg class="ic"><use href="#d19"/></svg><svg class="ic"><use href="#d20"/></svg><svg class="ic"><use href="#d21"/></svg><svg class="ic"><use href="#d22"/></svg><svg class="ic"><use href="#d23"/></svg><svg class="ic"><use href="#d24"/></svg><svg class="ic"><use href="#d25"/></svg><svg class="ic"><use href="#d26"/></svg><svg class="ic"><use href="#d27"/></svg>
    </aside>

    <div class="main">
      <div class="upper">
        <section class="doc">
          <div class="tabbar">
            <div class="tabs">
              <div class="doc-tab"><span>BAKO oferty 2022.dwg*</span><svg class="tab-x"><use href="#x"/></svg></div>
              <button class="tab-add"><svg viewBox="0 0 14 14"><path d="M7 1v12M1 7h12" stroke="#333" stroke-width="2" fill="none"/></svg></button>
            </div>
            <div class="tabfoot"></div>
          </div>

          <svg class="canvas" viewBox="62 146 1409 731">
            <defs><clipPath id="prof"><path d="M628.500 446V223L632 219.500H660.500V245.500H673.500V219.500H714.500V267.500H783.500V219.500H824.500V245.500H837.500V219.500H866L869.500 223V394Q869.500 400.500 863 400.500H847.500V413.500H744.500V396.500H723.500V413.500H679.500V461.500H671.500V476L669.500 478.500Z"/></clipPath></defs>
            <path class="l-k" d="M289.500 146V877M1194.500 146V877"/>
            <path class="l-g" d="M333.500 146V877M732.500 146V877"/>
            <path class="l-gt" d="M1173.500 146V877"/>
            <path class="l-r" d="M62 604.500H1472"/>
            <path class="l-g" d="M567.500 192.500V635M628.500 192.500V220M869.500 192.500V220M567.500 192.500H869.500"/>
            <path class="l-g" d="M923 430.500H980M976.500 430.500V547M917 512.500H945M938.500 512.500V613M567.500 697.500H538M543.500 697.500V768M567.500 808V863M602.500 808V835M748.500 808V835M791.500 808V835M863.500 808V835M910.500 808V835M912.500 808V863M567.500 830.500H923M567.500 857.500H912.500M919.500 858.500H948"/>
            <path class="l-g" d="M562 198l12-12M623 198l12-12M864 198l12-12M971 425l11 11M933 507l12 12M538 692l12 12M562 836l12-12M597 836l12-12M743 836l12-12M786 836l12-12M858 836l12-12M905 836l12-12M908 836l12-12M562 863l12-12M907 863l12-12M912.500 835L919.500 858.500"/>
            <path class="l-h" clip-path="url(#prof)" d="M600-43L900 257M600-4L900 296M600 35L900 335M600 73L900 373M600 112L900 412M600 151L900 451M600 190L900 490M600 229L900 529M600 267L900 567M600 306L900 606M600 345L900 645M600 384L900 684"/>
            <path class="l-k" d="M628.500 446V223L632 219.500H660.500V245.500H673.500V219.500H714.500V267.500H783.500V219.500H824.500V245.500H837.500V219.500H866L869.500 223V394Q869.500 400.500 863 400.500H847.500V413.500H744.500V396.500H723.500V413.500H679.500V461.500H671.500V476L669.500 478.500Z"/>
            <path class="f-r" d="M748.500 424L756 431.500V471.500L748.500 478.500ZM791.500 424L785 431V471.500L791.500 477.500Z"/>
            <g class="d-r">
              <path d="M583 430.500H923M582 512.500H917M598.500 478.500H790.500M598.500 525.500H757.500M598.500 478.500V577.500M757.500 478.500V525.500M753.500 478.500V635M787.500 478.500V636M587.500 506.500H598.500M587.500 506.500V557.500H598.500M576 532.500H614M748.500 637V805M602.500 676V805"/>
              <path d="M598.500 577.500L619.500 591.500V621.500L603.500 636.500M753.500 571.500L727.500 588.500V623.500L748.500 637L753.500 635M787.500 636L791.500 637.500"/>
              <circle cx="770" cy="454.500" r="9"/><circle cx="643" cy="501.500" r="8.700"/><circle cx="703.500" cy="501.500" r="8.700"/>
            </g>
            <path class="l-br" d="M791.500 512.500V448.500L796.500 443.500H802.500L806 450 812.500 452.500 818.500 450 822 443.500H829.500L832.500 447.500H838.500L841.500 443.500H852.500V435.500H860.500Q869.500 436 869.500 445V480"/>
            <path class="l-b" d="M869.500 480V484.500H860.500"/>
            <path class="l-t" d="M860.500 484.500L851.500 495 830 497.500 815 503.500 807.500 512.500H791.500M870 471.500H886.500V621.500L859 631 858.500 633.500 862.500 637.500V805M779.500 503.500H790.500M779.500 503.500V621.500L796 628.500V634.500L791.500 637.500V805M779.500 560.500H886.500M886.500 541.500H897.500V592.500H886.500M791.500 676H862.500"/>
            <circle class="l-t" cx="832.500" cy="536" r="8.700"/>
            <path class="l-y d-c" d="M875 567.500H913"/>
            <path class="l-y d-c" d="M524 805.500H980"/>
            <path class="l-m" d="M567.500 637.500H602.500V676H791.500M567.500 637.500V805M567.500 697.500H912.500M862.500 676H912.500V805M843.500 676V680.500H912.500M869 637.500H910.500V805"/>
            <path class="l-m" d="M863.500 648.500L869 637.500"/>
            <rect class="cur" x="729.500" y="601.500" width="6" height="6"/>
            <path class="f-g" d="M973.500 763.500L961.500 776.500 957 796.500 958 820 956 825 965 836.500 970.500 823.500H966.500L965 796.500 969.500 776.500 978.500 763.500Z"/>
            <path class="l-g d-s" d="M978 763Q998 775 997 805 996 830 985 840M985 775Q990 800 987 820 986 832 982 841H988L993 828"/>
            <path class="l-g" d="M978.500 803l4 4M982.500 803l-4 4"/>
            <text class="cad" x="597" y="190" text-anchor="middle">14</text>
            <text class="cad" x="749" y="190" text-anchor="middle">56</text>
            <text class="cad" x="585" y="828" text-anchor="middle">8</text>
            <text class="cad" x="675.500" y="828" text-anchor="middle">34</text>
            <text class="cad" x="770" y="828" text-anchor="middle">10</text>
            <text class="cad" x="827" y="826" text-anchor="middle">16,5</text>
            <text class="cad" x="887" y="828" text-anchor="middle">11</text>
            <text class="cad" x="740" y="856" text-anchor="middle">80</text>
            <text class="cad" x="934" y="855" text-anchor="middle">0,5</text>
            <text class="cad" transform="translate(974 546) rotate(-90)">ø174</text>
            <text class="cad" transform="translate(937 613) rotate(-90)">ø136</text>
            <text class="cad" transform="translate(541 766) rotate(-90)">ø50</text>
            <text class="num red" x="683" y="659" text-anchor="middle">1</text>
            <text class="num red" x="771" y="659" text-anchor="middle">2</text>
            <text class="num cyan" x="828" y="659" text-anchor="middle">8</text>
          </svg>

          <div class="sheets">
            <div class="sheet active"><svg class="sheet-shape" viewBox="0 0 58 15"><path d="M1 0L5 13Q5.500 14.500 7 14.500H51Q52.500 14.500 53 13L57 0" fill="#fff" stroke="#222"/></svg><span>Model</span></div>
            <div class="sheet"><svg class="sheet-shape" viewBox="0 0 72 15"><path d="M1 0L5 13Q5.500 14.500 7 14.500H65Q66.500 14.500 67 13L71 0" fill="#f0f0f0" stroke="#222"/></svg><span>Layout1</span></div>
            <button class="sheet-add"><svg viewBox="0 0 10 10"><path d="M5 0v10M0 5h10" stroke="#666" fill="none"/></svg></button>
          </div>
        </section>

        <aside class="panel">
          <div class="props">
            <div class="combo sel"><div class="val">Brak wyboru</div><span class="arrow"><svg class="cv"><use href="#chev"/></svg></span></div>
            <div class="ptools">
              <button class="pbtn"><svg class="ic"><use href="#p-sel"/></svg></button>
              <button class="pbtn"><svg class="ic"><use href="#p-add"/></svg></button>
              <button class="pbtn"><svg class="ic"><use href="#p-win"/></svg></button>
              <button class="pbtn"><svg class="ic"><use href="#p-quick"/></svg></button>
              <button class="pbtn q">?</button>
            </div>

            <section class="sec">
              <h3 class="sec-h">Ogólne<i class="up"></i></h3>
              <div class="rows">
                <div class="row"><svg class="ic"><use href="#p-link"/></svg><div class="f"></div></div>
                <div class="row"><svg class="ic"><use href="#p-fill"/></svg><div class="f c"><div class="val pad"><span class="dot big"></span>ByLayer</div><span class="arrow"><svg class="cv"><use href="#chev"/></svg></span></div></div>
                <div class="row"><svg class="ic"><use href="#p-trans"/></svg><div class="f">0</div></div>
                <div class="row"><svg class="ic"><use href="#p-lscale"/></svg><div class="f">10</div></div>
                <div class="row"><svg class="ic"><use href="#p-ltype"/></svg><div class="f c"><div class="val">ByLayer<span class="wide">Solid line</span></div><span class="arrow"><svg class="cv"><use href="#chev"/></svg></span></div></div>
                <div class="row"><svg class="ic"><use href="#p-lw"/></svg><div class="f c"><div class="val"><span class="dash"></span>ByLayer</div><span class="arrow"><svg class="cv"><use href="#chev"/></svg></span></div></div>
                <div class="row"><svg class="ic"><use href="#p-layer"/></svg><div class="f c"><div class="val">3_WYMIAROWANIE</div><span class="arrow"><svg class="cv"><use href="#chev"/></svg></span></div></div>
              </div>
            </section>

            <section class="sec">
              <h3 class="sec-h">Styl drukowania<i class="up"></i></h3>
              <div class="rows">
                <div class="row"><svg class="ic"><use href="#p-ctb"/></svg><div class="f c"><div class="val">monochrome.ctb</div><span class="arrow"><svg class="cv"><use href="#chev"/></svg></span></div></div>
                <div class="row"><svg class="ic"><use href="#p-disp"/></svg><div class="f c"><div class="val">Nie</div><span class="arrow"><svg class="cv"><use href="#chev"/></svg></span></div></div>
                <div class="row"><svg class="ic"><use href="#p-tab"/></svg><div class="f ro">Brak</div></div>
                <div class="row"><svg class="ic"><use href="#p-col"/></svg><div class="f c dis"><div class="val"></div><span class="arrow"><svg class="cv"><use href="#chev"/></svg></span></div></div>
              </div>
            </section>

            <section class="sec">
              <h3 class="sec-h">Widok<i class="up"></i></h3>
              <div class="rows">
                <div class="row"><svg class="ic"><use href="#p-w"/></svg><div class="f ro">327.1591</div></div>
                <div class="row"><svg class="ic"><use href="#p-h"/></svg><div class="f ro">169.5005</div></div>
                <div class="row"><svg class="ic"><use href="#p-cx"/></svg><div class="f ro">918.1771</div></div>
                <div class="row"><svg class="ic"><use href="#p-cy"/></svg><div class="f ro">-3556.2956</div></div>
                <div class="row"><svg class="ic"><use href="#p-cz"/></svg><div class="f ro">0</div></div>
              </div>
            </section>

            <section class="sec">
              <h3 class="sec-h">Różne<i class="up"></i></h3>
              <div class="rows">
                <div class="row"><svg class="ic"><use href="#p-u1"/></svg><div class="f c"><div class="val">Nie</div><span class="arrow"><svg class="cv"><use href="#chev"/></svg></span></div></div>
                <div class="row"><svg class="ic"><use href="#p-u2"/></svg><div class="f c"><div class="val">Nie</div><span class="arrow"><svg class="cv"><use href="#chev"/></svg></span></div></div>
                <div class="row"><svg class="ic"><use href="#p-u3"/></svg><div class="f c"><div class="val">Tak</div><span class="arrow"><svg class="cv"><use href="#chev"/></svg></span></div></div>
                <div class="row"><svg class="ic"><use href="#p-a"/></svg><div class="f c"><div class="val">1:1</div><span class="arrow"><svg class="cv"><use href="#chev"/></svg></span></div></div>
                <div class="row"><svg class="ic"><use href="#p-u4"/></svg><div class="f ro"></div></div>
              </div>
            </section>
          </div>

          <div class="vstrip">
            <div class="vtop">
              <svg class="vx"><use href="#x"/></svg>
              <svg class="vpin"><use href="#pin"/></svg>
            </div>
            <div class="vbot">
              <span class="vtext bold">Właściwości</span>
              <svg class="vic"><use href="#palette"/></svg>
            </div>
          </div>
          <div class="vtabs"><div class="vtab"><span class="vtext">Właściwości</span></div></div>
        </aside>
      </div>

      <section class="cmd">
        <div class="cmd-h"><strong>Okno poleceń</strong><div class="cmd-ctl"><svg class="wi"><use href="#rst"/></svg><svg class="wi"><use href="#x"/></svg></div></div>
        <div class="cmd-b">
          <div class="cmd-log"><span>:</span><span>:</span><span>:</span><span>:</span></div>
          <div class="scroll"><i class="sup"></i><i class="thumb"></i><i class="sdn"></i></div>
        </div>
        <div class="cmd-in">:</div>
      </section>
    </div>
  </div>

  <footer class="status">
    <div class="st-l">DraftSight 2021 x64</div>
    <button class="sb"><svg class="ic"><use href="#st1"/></svg></button>
    <button class="sb"><svg class="ic"><use href="#st2"/></svg></button>
    <button class="sb"><svg class="ic"><use href="#st3"/></svg></button>
    <button class="sb on"><svg class="ic"><use href="#st4"/></svg></button>
    <button class="sb on"><svg class="ic"><use href="#st5"/></svg></button>
    <button class="sb on"><svg class="ic"><use href="#st6"/></svg></button>
    <div class="anno">Adnotacja<i class="down"></i></div>
    <span class="scale">(1:1)</span>
    <span class="coords">(-3668.3828,-1271.9764,0)</span>
  </footer>
  <div class="taskbar"><i class="task-on"></i><span class="clock">15:07</span></div>
</div>
</body>
</html>
```
FILE: styles.css
```css
* { box-sizing: border-box; }
html, body { margin: 0; padding: 0; background: #fff; }
body { width: 1928px; height: 1268px; overflow: hidden; font: 12px/16px "Open Sans", "Noto Sans", sans-serif; color: #111; }
button { padding: 0; font: inherit; cursor: default; }
.defs { display: none; }

/* icon stroke classes */
.k { fill: none; stroke: #222; }
.k2 { fill: none; stroke: #222; stroke-width: 1.5; }
.kf { fill: #222; }
.b { fill: none; stroke: #0b8ad9; }
.b2 { fill: none; stroke: #0b7bd0; stroke-width: 2; }
.bd { fill: none; stroke: #0b8ad9; stroke-dasharray: 2 1.500; }
.bf { fill: #0b8ad9; }
.bt { fill: none; stroke: #1b8fdc; stroke-width: 1.500; }
.y { fill: #fbc311; stroke: #444; }
.y2 { fill: #fbc311; stroke: #222; stroke-width: 1.500; }
.yn { fill: #fbc311; }
.g { fill: none; stroke: #2e9e3f; }
.g2 { fill: none; stroke: #2e9e3f; stroke-width: 2; }
.gf { fill: #38a24a; }
.w { fill: #fff; stroke: #222; }
.wf { fill: #fff; }
.s { fill: none; stroke: #8a9aa8; }
.s2 { fill: none; stroke: #c6c6c6; stroke-width: 2; }
.sf { fill: #a5b4bf; stroke: #333; }
.t1 { fill: none; stroke: #777; stroke-dasharray: 2 1; }
.dk { fill: #4e5a62; stroke: #333; }
.h { fill: #eab38a; stroke: #333; }
.dt { fill: none; stroke: #222; stroke-dasharray: 2 1; }
.dt2 { fill: none; stroke: #222; stroke-width: 1.500; stroke-dasharray: 2 1; }
.dots { fill: none; stroke: #222; stroke-dasharray: 1 1; }
.sq rect { fill: #a5b4bf; stroke: #333; }
.nd rect { fill: #0b7bd0; stroke: #111; }
.ltr, .ltx, .ltb, .ltb2, .lts, .lbg { font-family: "Liberation Mono", monospace; fill: #222; }
.ltr { font-size: 10px; }
.ltx { font-size: 13px; }
.ltb { font-size: 10px; fill: #222; }
.ltb2 { font-size: 10px; fill: #0b7bd0; }
.lts { font-size: 7px; }
.lbg { font-size: 19px; font-weight: 700; }
.ic { width: 22px; height: 22px; flex: none; display: block; padding: 1.500px; }
.logo-t { font: italic 700 17px "Liberation Sans", sans-serif; fill: #fff; }

.app { position: relative; width: 1928px; height: 1048px; background: #f0f0f0; display: flex; flex-direction: column; }
.app::after { content: ""; position: absolute; top: 86px; right: 0; width: 2px; height: 955px; background: #1a90e0; }

/* header */
.head { height: 59px; display: grid; grid-template-columns: 44px 1fr; grid-template-rows: 32px 27px; }
.logo-cell { grid-row: 1 / 3; padding: 8px 0 0 5px; }
.logo { width: 28px; height: 30px; display: block; }
.titlebar { display: flex; align-items: flex-start; position: relative; }
.quick { display: flex; align-items: center; gap: 4.750px; padding: 3px 0 0 2px; width: 640px; flex: none; }
.title { flex: 1; font-size: 14.200px; line-height: 20px; color: #555; padding: 6px 0 0 164px; white-space: nowrap; }
.winctl { display: flex; align-items: center; gap: 11px; padding: 6px 16px 0 0; flex: none; }
.winctl.inner { padding: 0 14px 0 0; gap: 8px; margin-top: -6px; }
.wi { width: 10px; height: 10px; display: block; }
.min { width: 5px; height: 2px; background: #111; margin-top: 7px; }
.menubar { display: flex; justify-content: space-between; align-items: center; }
.menu { display: flex; gap: 16px; padding-left: 8px; margin-top: -2px; font-size: 11.700px; color: #222; }
.dd { width: 6px; height: 5px; flex: none; border-left: 3px solid transparent; border-right: 3px solid transparent; border-top: 5px solid #222; }
.dd.off { border-top-color: #999; }
.more { width: 6px; height: 6px; margin-left: 2px; flex: none; background: linear-gradient(#567 0 1px, transparent 1px 3px, #567 3px 5px, transparent 5px); }

/* toolbars */
.tb { display: flex; align-items: center; gap: 5px; padding-left: 6px; border-bottom: 2px solid #b8b8b8; }
.tb1 { height: 30px; border-top: 1px solid #fff; gap: 4.750px; padding-bottom: 1px; }
.tb2 { height: 29px; padding-top: 1px; }
.tb2 .bar { margin-left: -2px; }
.handle { width: 2px; height: 22px; flex: none; background: repeating-linear-gradient(#a8a8a8 0 2px, transparent 2px 4px); }
.sep { width: 1px; height: 22px; flex: none; background: #8c8c8c; }
.sep.first { margin-left: 2px; }
.bar { width: 1px; align-self: stretch; flex: none; background: #b0b0b0; }
.lmgr { margin-left: 2px; }
.combo { display: flex; height: 20px; flex: none; background: #fff; border: 1px solid #a8a8a8; }
.val { flex: 1; min-width: 0; display: flex; align-items: center; padding-left: 2px; white-space: pre; line-height: 18px; }
.arrow { width: 16px; flex: none; background: #e1e1e1; border-left: 1px solid #b4b4b4; display: flex; align-items: center; justify-content: center; }
.cv { width: 10px; height: 6px; display: block; }
.layer-combo { width: 299px; margin-left: -2px; }
.layer-combo .val { gap: 5px; padding-left: 4px; }
.state-combo { width: 299px; margin-left: -5px; font-size: 11.600px; }
.c-color { width: 131px; margin-left: -1px; }
.c-color .val { padding-left: 4px; }
.c-ltype { width: 131px; margin-left: 2px; font-size: 11.500px; }
.c-ltype .wide { margin-left: 17px; }
.c-lw { width: 132px; margin-left: 2px; }
.wide { margin-left: 19px; }
.dot { width: 10px; height: 10px; border-radius: 50%; display: inline-block; flex: none; background: #0f0; border: 1px solid #286; }
.dot.dark { width: 12px; height: 13px; background: #2da036; }
.dot.big { width: 11px; height: 12px; }
.val > .dot.big:first-child { margin-right: 6px; }
.mini { width: 10px; height: 13px; flex: none; }
.dash { width: 32px; height: 1px; background: #111; margin: 0 4px 0 1px; flex: none; }

/* work area */
.work { height: 888px; display: flex; }
.strip { width: 31px; flex: none; display: flex; flex-direction: column; align-items: center; gap: 4px; padding: 2px 3px 0 0; border-right: 1px solid #a6a6a6; border-bottom: 1px solid #a6a6a6; }
.strip + .strip { padding-right: 0; }
.strip .ic { width: 22px; padding: 2px; }
.grip { width: 26px; height: 2px; margin-bottom: 6px; background: repeating-linear-gradient(90deg, #aaa 0 2px, transparent 2px 4px); }
.main { flex: 1; min-width: 0; display: flex; flex-direction: column; }
.upper { height: 778px; display: flex; flex: none; }
.doc { width: 1411px; flex: none; border-right: 2px solid #9a9a9a; display: flex; flex-direction: column; }
.tabbar { height: 28px; flex: none; }
.tabs { display: flex; height: 24px; }
.doc-tab { width: 239px; background: #fff; display: flex; align-items: center; padding-left: 41px; font-size: 12.500px; position: relative; }
.tab-x { width: 11px; height: 11px; margin-left: auto; margin-right: 14px; }
.tab-add { width: 26px; height: 23px; border: 1px solid #aaa; background: #dadada; display: flex; align-items: center; justify-content: center; }
.tab-add svg { width: 14px; height: 14px; display: block; }
.tabfoot { height: 4px; background: #fff; border-top: 1px solid #c8c8c8; }
.canvas { display: block; width: 1409px; height: 731px; flex: none; background: #e3dff8; }
.canvas path, .canvas circle, .canvas rect { shape-rendering: crispEdges; }
.l-k { fill: none; stroke: #000; }
.l-g { fill: none; stroke: #00ff00; }
.l-gt { fill: none; stroke: #55807a; }
.l-h { fill: none; stroke: #00e800; }
.l-r { fill: none; stroke: #ff0000; }
.d-r { fill: none; stroke: #ff0000; stroke-dasharray: 12 5; }
.d-r circle { stroke-dasharray: 6 3; }
.f-r { fill: #ff0000; }
.f-g { fill: #00ff00; }
.l-br { fill: none; stroke: #ad7a1f; }
.l-b { fill: none; stroke: #0000e0; }
.l-t { fill: none; stroke: #4a7a84; }
.l-y { fill: none; stroke: #ffff00; }
.d-c { stroke-dasharray: 22 10 2 10; }
.l-m { fill: none; stroke: #ff00ff; }
.d-s { stroke-dasharray: 7 2; }
.cur { fill: none; stroke: #000; }
.cad { font: 300 17px Lato, "Liberation Sans", sans-serif; letter-spacing: .8px; fill: #00ff00; }
.num { font: italic 300 26px Lato, "Liberation Sans", sans-serif; }
.red { fill: #ff0000; }
.cyan { fill: #00ffff; }
.sheets { height: 19px; flex: none; display: flex; gap: 4px; }
.sheet { width: 72px; height: 15px; position: relative; display: flex; justify-content: center; line-height: 15px; font-size: 12px; }
.sheet.active { width: 58px; font-weight: 700; }
.sheet span { position: relative; }
.sheet-shape { position: absolute; left: 0; top: 0; width: 100%; height: 15px; display: block; }
.sheet-add { width: 20px; height: 13px; margin: 1px 0 0 5px; border: 1px solid #aaa; background: #e6e6e6; display: flex; align-items: center; justify-content: center; }
.sheet-add svg { width: 10px; height: 10px; display: block; }

/* properties panel */
.panel { flex: 1; min-width: 0; display: flex; padding-right: 2px; }
.props { width: 401px; flex: none; padding: 11px 0 0 14px; }
.sel { width: 376px; }
.sel .val { padding-left: 2px; }
.ptools { display: flex; gap: 8px; margin: 7px 0 8px 1px; }
.pbtn { width: 25px; height: 24px; background: #e1e1e1; border: 1px solid #adadad; display: flex; align-items: center; justify-content: center; }
.q { font-weight: 800; font-size: 16px; color: #222; }
.sec { width: 366px; margin-bottom: 6px; border: 1px solid #dcdcdc; border-top: 0; border-right: 0; }
.sec-h { margin: 0 0 0 -1px; height: 20px; display: flex; align-items: center; justify-content: space-between; padding: 0 9px 0 5px; background: #dfe3fb; border: 1px solid #b2b2b2; font-size: 12.500px; font-weight: 700; color: #111; }
.up { border-left: 4.500px solid transparent; border-right: 4.500px solid transparent; border-bottom: 5px solid #111; }
.rows { padding-top: 13px; display: flex; flex-direction: column; gap: 2px; }
.row { display: flex; align-items: center; gap: 9px; padding-left: 8px; }
.row .ic { margin: -2px 0; }
.f { flex: 1; min-width: 0; height: 24px; background: #fff; border: 1px solid #a8a8a8; padding-left: 2px; line-height: 23px; color: #222; white-space: pre; }
.f.c { height: 20px; padding-left: 0; display: flex; line-height: 18px; }
.f.c .val { padding-left: 2px; }
.f.c .pad { padding-left: 5px; }
.f.ro { background: #aecbea; }
.f.dis { background: #f0f0f0; border-color: #aab7c6; }
.f.dis .arrow { background: #dcdcdc; }
.vstrip { width: 24px; flex: none; background: #bebebe; border-left: 1px solid #888; border-right: 1px solid #999; display: flex; flex-direction: column; justify-content: space-between; align-items: center; height: 775px; }
.vtop { display: flex; flex-direction: column; align-items: center; gap: 12px; padding-top: 5px; }
.vx { width: 10px; height: 10px; }
.vpin { width: 11px; height: 15px; }
.vbot { display: flex; flex-direction: column; align-items: center; gap: 7px; padding-bottom: 4px; }
.vic { width: 15px; height: 15px; display: block; }
.vtext { writing-mode: vertical-rl; transform: rotate(180deg); font-size: 11.500px; line-height: 14px; }
.bold { font-weight: 700; }
.vtabs { width: 27px; flex: none; }
.vtab { width: 21px; height: 87px; background: #fff; border: 1px solid #e0e0e0; border-top: 0; border-left: 0; display: flex; align-items: center; justify-content: center; }

/* command window */
.cmd { flex: none; width: 1858px; height: 110px; display: flex; flex-direction: column; border-left: 1px solid #a6a6a6; }
.cmd-h { height: 25px; flex: none; background: #bebebe; border-top: 2px solid #828282; border-bottom: 1px solid #828282; display: flex; align-items: center; justify-content: space-between; padding: 0 6px 0 3px; }
.cmd-h strong { font-size: 12px; font-weight: 700; color: #111; }
.cmd-ctl { display: flex; gap: 13px; }
.cmd-b { height: 68px; flex: none; display: flex; background: #fff; border-bottom: 1px solid #a8a8a8; }
.cmd-log { flex: 1; display: flex; flex-direction: column; padding: 3px 0 0 3px; line-height: 16px; color: #8a6d2b; font-weight: 700; }
.scroll { width: 16px; flex: none; background: #f0f0f0; position: relative; display: flex; flex-direction: column; align-items: center; }
.sup { border-left: 3.500px solid transparent; border-right: 3.500px solid transparent; border-bottom: 5px solid #222; margin-top: 8px; }
.thumb { width: 14px; height: 10px; background: #c4c4c4; margin-top: 27px; }
.sdn { border-left: 3.500px solid transparent; border-right: 3.500px solid transparent; border-top: 5px solid #222; margin-top: 4px; }
.cmd-in { flex: 1; background: #fff; padding: 0 0 0 3px; line-height: 16px; color: #0b7bd0; font-weight: 700; }

/* status */
.status { height: 35px; flex: none; display: flex; align-items: center; gap: 8px; font-size: 11px; }
.st-l { width: 793px; flex: none; padding-left: 2px; color: #222; }
.sb { width: 25px; height: 24px; flex: none; background: #e1e1e1; border: 1px solid #adadad; display: flex; align-items: center; justify-content: center; }
.sb.on { background: #d8eafa; border-color: #1d5fa6; }
.sb .ic { width: 20px; height: 20px; padding: 0; }
.sb:nth-of-type(3) { margin-right: 2px; }
.anno { width: 88px; height: 20px; flex: none; margin-left: 3px; display: flex; align-items: center; justify-content: space-between; padding: 0 6px 0 3px; background: #e1e1e1; border: 1px solid #adadad; color: #222; font-size: 11.500px; }
.down { border-left: 5px solid transparent; border-right: 5px solid transparent; border-top: 7px solid #111; }
.scale { color: #1d5fa6; }
.coords { color: #222; margin-left: -1px; }
.taskbar { height: 7px; flex: none; position: relative; overflow: hidden; background: linear-gradient(90deg, #22393f 0 50%, #1f3044 100%); margin-right: 10px; }
.task-on { position: absolute; left: 393px; top: 0; width: 48px; height: 7px; background: #4f6064; }
.clock { position: absolute; left: 1822px; top: 5px; font-size: 10px; color: #fff; }
```
